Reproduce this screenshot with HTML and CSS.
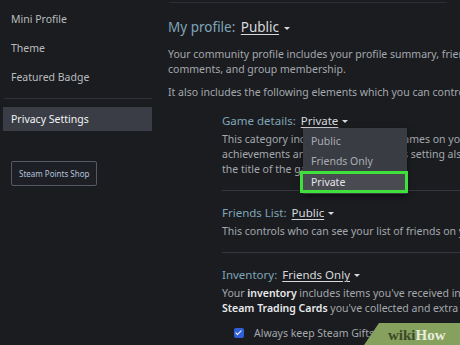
FILE: index.html
```html
<!DOCTYPE html>
<html lang="en">
<head>
<meta charset="UTF-8">
<meta name="viewport" content="width=device-width, initial-scale=1.0">
<title>Privacy Settings</title>
<link rel="stylesheet" href="styles.css">
</head>
<body>

<div class="sidebar">
    <a class="side-link">Mini Profile</a>
    <a class="side-link">Theme</a>
    <a class="side-link">Featured Badge</a>
    <div class="side-sep"></div>
    <a class="side-link active">Privacy Settings</a>
    <button class="points-btn">Steam Points Shop</button>
</div>

<div class="main">
    <div class="top-rule"></div>

    <h2 class="title">My profile: <span class="choice">Public</span> <span class="caret"></span></h2>
    <p class="desc first">Your community profile includes your profile summary, friends list, badges, Steam Level, showcases,<br>comments, and group membership.</p>
    <p class="desc gap">It also includes the following elements which you can control separately.</p>

    <div class="group">
        <div class="setting">
            <h3 class="label">Game details: <span class="choice">Private</span> <span class="caret"></span></h3>
            <p class="desc">This category includes the list of all games on your Steam account, games you've wishlisted, your<br>achievements and your playtime. This setting also controls whether you're seen as "in-game" and<br>the title of the game you are playing.</p>

            <div class="menu">
                <div class="menu-item">Public</div>
                <div class="menu-item">Friends Only</div>
                <div class="menu-item picked">Private</div>
            </div>
        </div>

        <div class="setting">
            <h3 class="label">Friends List: <span class="choice">Public</span> <span class="caret"></span></h3>
            <p class="desc">This controls who can see your list of friends on your Steam Community profile.</p>
        </div>

        <div class="setting">
            <h3 class="label">Inventory: <span class="choice">Friends Only</span> <span class="caret"></span></h3>
            <p class="desc">Your <b>inventory</b> includes items you've received in games that use Steam Trading. It also includes any<br><b>Steam Trading Cards</b> you've collected and extra copies or Steam Gifts.</p>
            <label class="check"><span class="box"></span>Always keep Steam Gifts private even if users can see my inventory.</label>
        </div>
    </div>
</div>

<div class="wm"><span class="wm-wiki">wiki</span><span class="wm-how">How</span></div>

</body>
</html>
```

FILE: styles.css
```css
body {
    background-color: #1b1c20;
    color: #acb2b8;
    font-family: "Noto Sans", "Open Sans", sans-serif;
    margin: 0;
    width: 460px;
    height: 345px;
    overflow: hidden;
    display: flex;
    position: relative;
}
.sidebar {
    width: 149px;
    flex-shrink: 0;
    padding: 10px 0 0 3px;
    display: flex;
    flex-direction: column;
}
.side-link {
    display: block;
    font-size: 10.5px;
    color: #b8bcbf;
    padding: 0 8px;
    height: 29px;
    line-height: 18px;
    flex-shrink: 0;
}
.side-sep {
    height: 1px;
    background-color: #2e3138;
    margin: 1px 0 8px 1px;
    flex-shrink: 0;
}
.side-link.active {
    background-color: #3a3d45;
    color: #f2f4f5;
    height: 24px;
    line-height: 24px;
}
.points-btn {
    align-self: flex-start;
    margin: 30px 0 0 8px;
    font-family: inherit;
    font-size: 8px;
    color: #b4c2dc;
    background-color: #1d1f25;
    border: 1px solid #555b66;
    border-radius: 2px;
    height: 25px;
    padding: 0 7px;
}
.main {
    flex: 1;
    padding: 0 0 0 16px;
    white-space: nowrap;
    overflow: hidden;
}
.top-rule {
    height: 1px;
    background-color: #2b2e34;
    margin: 2px 13px 0 1px;
}
.title {
    font-size: 13.5px;
    font-weight: normal;
    color: #7fa5b8;
    margin: 14px 0 0 0;
    line-height: 20px;
}
.choice {
    color: #d6d9dc;
    text-decoration: underline;
    text-underline-offset: 2px;
    margin-left: 2px;
}
.caret {
    display: inline-block;
    width: 0;
    height: 0;
    border-left: 3px solid transparent;
    border-right: 3px solid transparent;
    border-top: 3px solid #d6d9dc;
    vertical-align: middle;
    margin-left: 1px;
}
.desc {
    font-size: 10.5px;
    line-height: 15px;
    margin: 8px 0 0 0;
    color: #a3a8ad;
}
.desc.first {
    margin-top: 10px;
}
.desc b {
    color: #e8eaec;
    font-weight: 600;
}
.desc.gap {
    margin-top: 8px;
}
.group {
    padding-left: 54px;
    margin-top: 12px;
}
.setting {
    position: relative;
    border-bottom: 1px solid #34373d;
    padding-bottom: 13px;
    margin-bottom: 13px;
    margin-right: -20px;
}
.setting:last-child {
    border-bottom: none;
}
.label {
    font-size: 11.5px;
    font-weight: normal;
    color: #7fa5b8;
    margin: 0;
    line-height: 18px;
}
.setting .desc {
    margin-top: 2px;
}
.menu {
    position: absolute;
    left: 81px;
    top: 16px;
    width: 104px;
    height: 66px;
    background-color: #3a3c43;
    box-shadow: 0 2px 6px rgba(0, 0, 0, 0.5);
    padding-top: 3px;
    box-sizing: border-box;
    white-space: nowrap;
}
.menu-item {
    font-size: 10.5px;
    color: #a9adb3;
    height: 20px;
    line-height: 20px;
    padding-left: 8px;
}
.menu-item.picked {
    color: #e4e6e8;
    background-color: #4a4b52;
    border: 3px solid #3fe23b;
    margin: 0 -1px 0 -3px;
    height: 16px;
    line-height: 16px;
    padding-left: 8px;
}
.check {
    display: flex;
    align-items: center;
    font-size: 10.5px;
    color: #a3a8ad;
    margin: 10px 0 0 12px;
}
.box {
    flex-shrink: 0;
    width: 10px;
    height: 10px;
    background-color: #2f5fd8;
    border-radius: 2px;
    margin-right: 10px;
    position: relative;
}
.box::after {
    content: "";
    position: absolute;
    left: 3px;
    top: 1px;
    width: 2px;
    height: 5px;
    border: solid #ffffff;
    border-width: 0 1.5px 1.5px 0;
    transform: rotate(45deg);
}
.wm {
    position: absolute;
    right: 0;
    bottom: 0;
    width: 96px;
    height: 22px;
    background-color: #86a05e;
    clip-path: polygon(15px 0, 100% 0, 100% 100%, 0 100%);
    font-family: "Liberation Serif", serif;
    font-weight: bold;
    font-size: 15px;
    line-height: 24px;
    padding-left: 24px;
    box-sizing: border-box;
    white-space: nowrap;
}
.wm-wiki {
    color: #3c4a2a;
}
.wm-how {
    color: #e7eddc;
}
```
